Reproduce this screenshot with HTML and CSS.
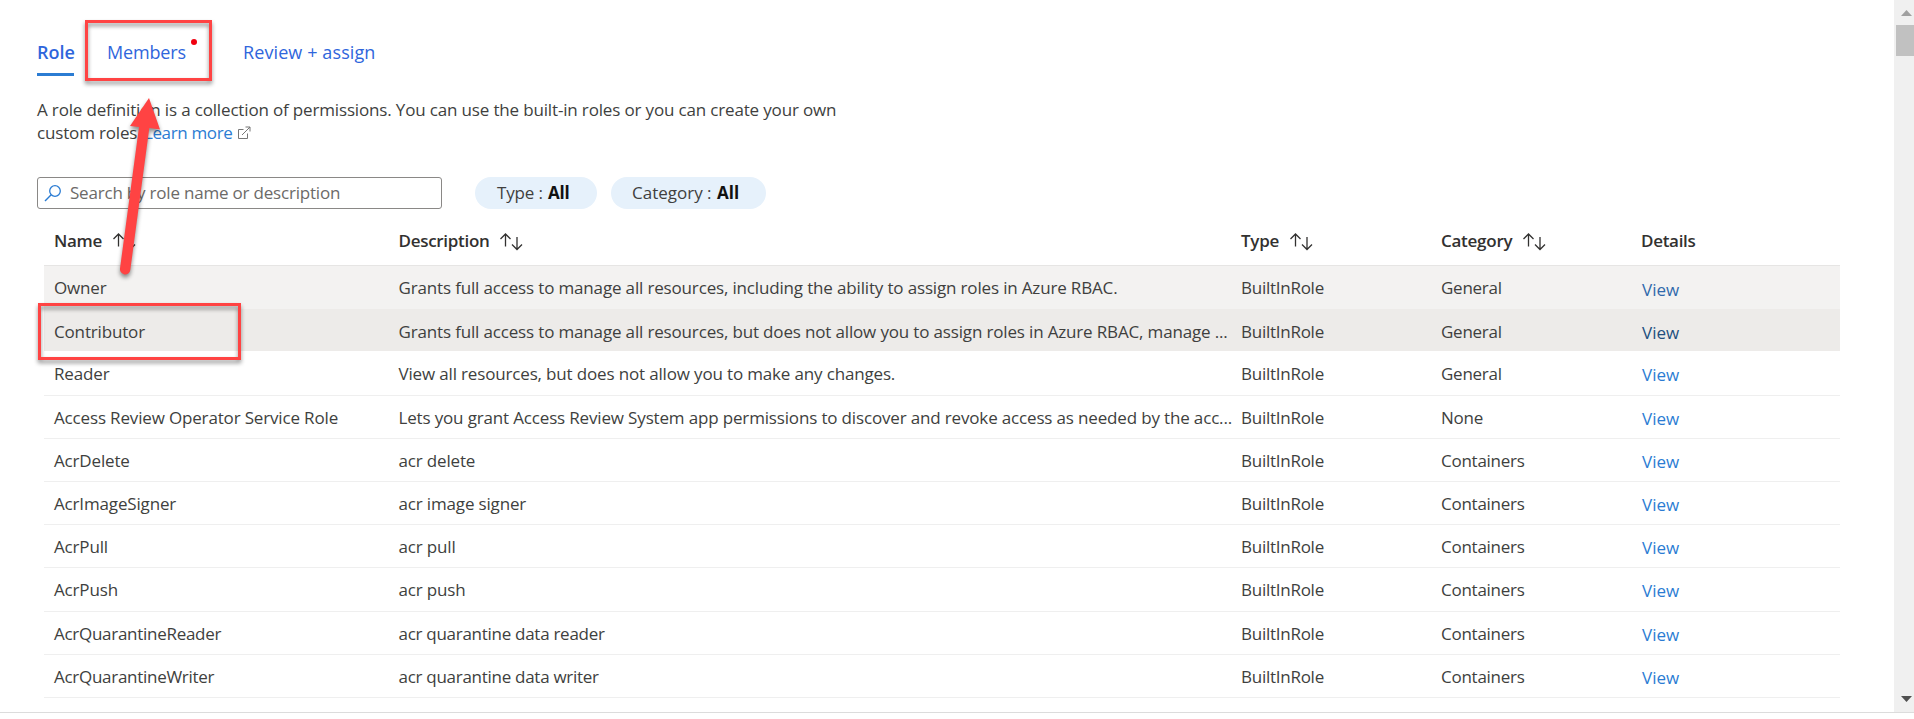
FILE: index.html
```html
<!DOCTYPE html>
<html lang="en">
<head>
<meta charset="utf-8">
<title>Add role assignment</title>
<link rel="stylesheet" href="styles.css">
</head>
<body>
<svg class="defs" width="0" height="0" aria-hidden="true">
  <symbol id="sort" viewBox="0 0 24 20"><path d="M6.500 14.500V2M1.500 7l5-5 5 5M18 5v12.500M13 12.500l5 5 5-5" fill="none" stroke="#323130" stroke-width="1.300"/></symbol>
</svg>
<div class="pane">
  <main class="content">
    <nav class="tabs">
      <a class="tab active"><span>Role</span></a>
      <a class="tab members"><span>Members</span><i class="dot"></i></a>
      <a class="tab review"><span>Review + assign</span></a>
    </nav>
    <p class="intro">A role definition is a collection of permissions. You can use the built-in roles or you can create your own<br>custom roles. <a class="link">Learn more</a><svg class="ext" width="14" height="14" viewBox="0 0 14 14"><path d="M6.500 3.500H1.500v9h9V7.500M8.500 1h4.500v4.500M13 1L5 9" fill="none" stroke="#777" stroke-width="1"/></svg></p>
    <div class="filters">
      <div class="search"><svg width="18" height="18" viewBox="0 0 18 18"><circle cx="11" cy="7" r="5.300" fill="none" stroke="#2b7cd3" stroke-width="1.300"/><path d="M7.200 10.800L1 17" stroke="#2b7cd3" stroke-width="1.400"/></svg><span class="ph">Search by role name or description</span></div>
      <div class="chip type"><span>Type : <b>All</b></span></div>
      <div class="chip category"><span>Category : <b>All</b></span></div>
    </div>
    <section class="table">
      <div class="row head"><div>Name<svg class="sort"><use href="#sort"/></svg></div><div>Description<svg class="sort"><use href="#sort"/></svg></div><div>Type<svg class="sort"><use href="#sort"/></svg></div><div>Category<svg class="sort"><use href="#sort"/></svg></div><div>Details</div></div>
      <div class="row hover"><div>Owner</div><div>Grants full access to manage all resources, including the ability to assign roles in Azure RBAC.</div><div>BuiltInRole</div><div>General</div><a class="view">View</a></div>
      <div class="row selected"><div>Contributor</div><div>Grants full access to manage all resources, but does not allow you to assign roles in Azure RBAC, manage ...</div><div>BuiltInRole</div><div>General</div><a class="view">View</a></div>
      <div class="row"><div>Reader</div><div>View all resources, but does not allow you to make any changes.</div><div>BuiltInRole</div><div>General</div><a class="view">View</a></div>
      <div class="row"><div>Access Review Operator Service Role</div><div>Lets you grant Access Review System app permissions to discover and revoke access as needed by the acc...</div><div>BuiltInRole</div><div>None</div><a class="view">View</a></div>
      <div class="row"><div>AcrDelete</div><div>acr delete</div><div>BuiltInRole</div><div>Containers</div><a class="view">View</a></div>
      <div class="row"><div>AcrImageSigner</div><div>acr image signer</div><div>BuiltInRole</div><div>Containers</div><a class="view">View</a></div>
      <div class="row"><div>AcrPull</div><div>acr pull</div><div>BuiltInRole</div><div>Containers</div><a class="view">View</a></div>
      <div class="row tall"><div>AcrPush</div><div>acr push</div><div>BuiltInRole</div><div>Containers</div><a class="view">View</a></div>
      <div class="row tight"><div>AcrQuarantineReader</div><div>acr quarantine data reader</div><div>BuiltInRole</div><div>Containers</div><a class="view">View</a></div>
      <div class="row tight"><div>AcrQuarantineWriter</div><div>acr quarantine data writer</div><div>BuiltInRole</div><div>Containers</div><a class="view">View</a></div>
    </section>
  </main>
  <aside class="scrollbar">
    <svg class="up" width="11" height="6" viewBox="0 0 11 6"><path d="M0 6L5.500 0 11 6z" fill="#a0a0a0"/></svg>
    <div class="thumb"></div>
    <svg class="down" width="11" height="6" viewBox="0 0 11 6"><path d="M0 0L5.500 6 11 0z" fill="#505050"/></svg>
  </aside>
</div>
<div class="callout callout-members"></div>
<div class="callout callout-contributor"></div>
<svg class="arrow" width="60" height="190" viewBox="110 90 60 190"><path d="M149 98L160 129.500 149.300 128 130.300 270A5 5 0 0 1 120 268.500L139 127 130 126z" fill="#ff4343"/></svg>
</body>
</html>
```
FILE: styles.css
```css
* { box-sizing: border-box; }
body { margin: 0; background: #fff; color: #403f3e; font: 17px/23px "Open Sans", "Noto Sans", sans-serif; letter-spacing: -.16px; overflow: hidden; white-space: nowrap; }
.defs { position: absolute; }
.pane { display: flex; height: 713px; border-bottom: 1px solid #dcdcdc; }
.content { flex: 1; padding-left: 37px; }
.tabs { display: flex; padding-top: 36px; height: 76px; font-size: 18px; letter-spacing: 0; line-height: 32px; color: #2f66dc; }
.tab { display: flex; height: 40px; }
.active { width: 37px; border-bottom: 3px solid #2b7cd3; font-weight: 600; }
.members { margin-left: 33px; width: 136px; letter-spacing: -.15px; }
.review { letter-spacing: .1px; }
.dot { width: 6px; height: 6px; border-radius: 50%; background: #f00010; margin: 3px 0 0 5px; }
.intro { margin: 22px 0 0; height: 79px; }
.link { color: #2b7cd3; margin-left: -2px; letter-spacing: -.35px; }
.ext { margin-left: 4px; vertical-align: -1px; }
.filters { display: flex; height: 32px; }
.search { width: 405px; border: 1px solid #8a8886; border-radius: 3px; display: flex; align-items: center; padding-left: 6px; color: #6c6a68; }
.ph { margin: -2px 0 0 8px; letter-spacing: -.2px; }
.chip { height: 32px; border-radius: 16px; background: #e6f1fb; line-height: 31px; padding-left: 22px; }
.type { margin-left: 33px; width: 122px; }
.category { margin-left: 14px; width: 155px; padding-left: 21px; letter-spacing: 0; }
.chip b { color: #111; margin-left: 1px; }
.table { margin-left: 7px; width: 1796px; }
.row { display: grid; grid-template-columns: 344.5px 842.5px 200px 200px 1fr; padding-left: 10px; height: 43px; line-height: 44px; border-bottom: 1px solid #efefef; }
.row > :nth-child(3), .row > :nth-child(4) { letter-spacing: -.26px; }
.head { height: 57px; line-height: 64px; font-weight: 600; letter-spacing: -.3px; color: #323130; border-color: #e6e5e4; }
.sort { width: 24px; height: 20px; margin-left: 10px; vertical-align: -5px; }
.hover { background: #f3f2f1; border-color: #f3f2f1; }
.selected { height: 42px; line-height: 46px; background: #edebe9; border-color: #edebe9; }
.selected + .row { height: 45px; line-height: 46px; }
.tall { height: 44px; }
.tight { letter-spacing: -.28px; }
.view { color: #2b7cd3; padding: 1px 0 0 1px; height: 40px; letter-spacing: 0; }
.hover .view { color: #3069ab; padding-top: 2px; }
.selected .view { color: #23507f; }
.scrollbar { width: 20px; background: #f0f0f0; display: flex; flex-direction: column; padding-left: 2px; }
.up { margin: 10px 0 9px 5px; }
.thumb { height: 31px; background: #c1c1c1; }
.down { margin: auto 0 10px 5px; }
.callout { position: absolute; border: 3px solid #ff4343; filter: drop-shadow(0 3px 2px rgba(0,0,0,.45)); }
.callout-members { left: 85px; top: 20px; width: 127px; height: 61px; }
.callout-contributor { left: 38px; top: 303px; width: 203px; height: 57px; }
.arrow { position: absolute; left: 110px; top: 90px; filter: drop-shadow(0 3px 2px rgba(0,0,0,.45)); }
```
